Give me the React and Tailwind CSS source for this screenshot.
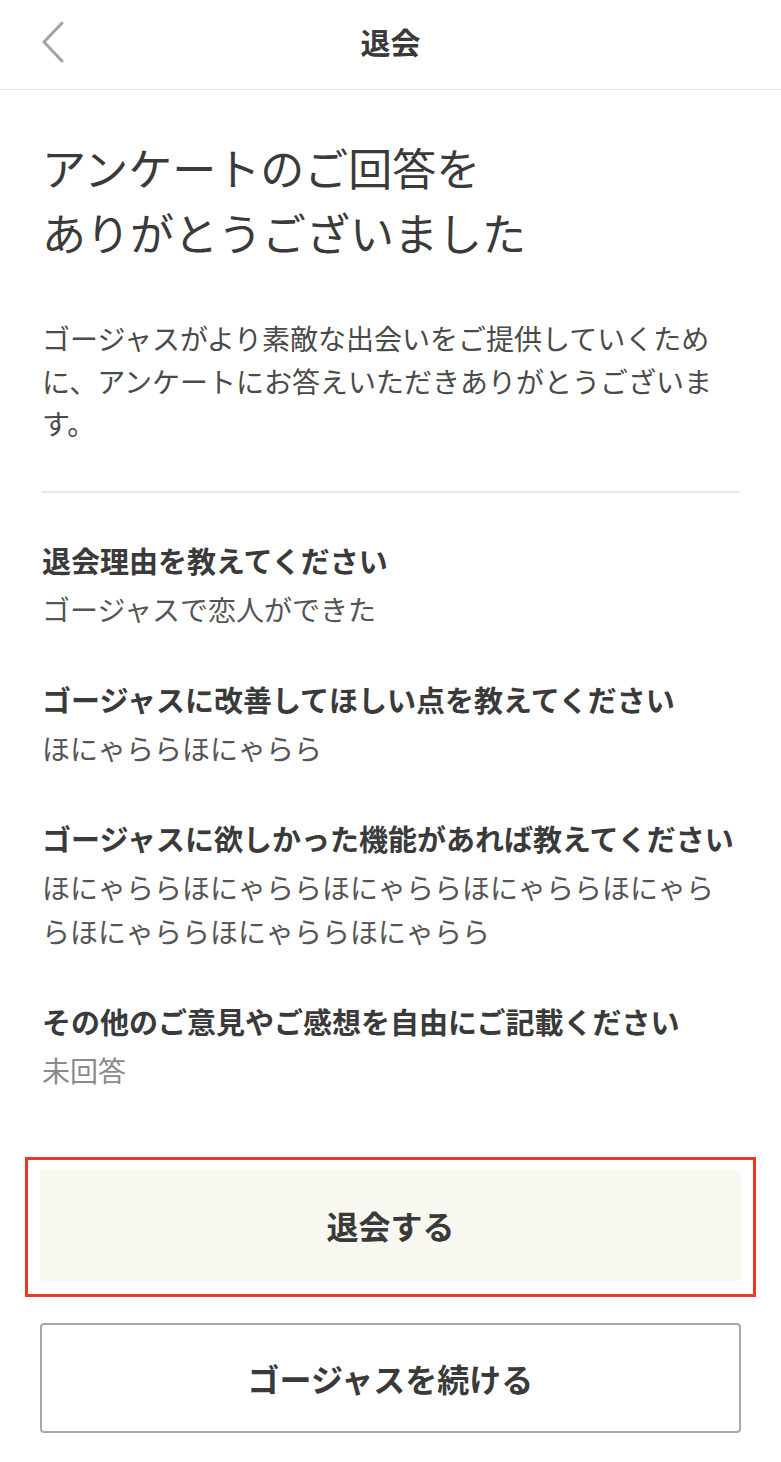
const font = {
  fontFamily: '"Noto Sans CJK JP", "Noto Sans", sans-serif',
};

const answers = [
  { q: "退会理由を教えてください", a: "ゴージャスで恋人ができた" },
  { q: "ゴージャスに改善してほしい点を教えてください", a: "ほにゃららほにゃらら" },
  {
    q: "ゴージャスに欲しかった機能があれば教えてください",
    a: "ほにゃららほにゃららほにゃららほにゃららほにゃららほにゃららほにゃららほにゃらら",
  },
  { q: "その他のご意見やご感想を自由にご記載ください", a: null },
];

export default function App() {
  return (
    <div
      className="min-h-screen bg-white text-[#3a3a3a] font-['Noto_Sans_CJK_JP','Noto_Sans',sans-serif]"
      style={font}
    >
      {/* header */}
      <div className="relative h-[90px] flex items-center justify-center border-b border-[#e6e6e6]">
        <button className="absolute left-[38px] top-[20px] w-[30px] h-[44px] flex items-center justify-center">
          <svg width="24" height="42" viewBox="0 0 24 42" fill="none">
            <path
              d="M21 2 L3 21 L21 40"
              stroke="#a4a59d"
              strokeWidth="3"
              strokeLinecap="round"
              strokeLinejoin="round"
            />
          </svg>
        </button>
        <h1 className="text-[30px] font-bold leading-none -mt-[8px]">退会</h1>
      </div>

      <div className="px-[42px]">
        <h2 className="pt-[45px] text-[44px] leading-[65px] font-normal">
          アンケートのご回答を
          <br />
          ありがとうございました
        </h2>

        <p className="mt-[52px] text-[28px] leading-[42.5px] text-[#4a4a4a]">
          ゴージャスがより素敵な出会いをご提供していくために、アンケートにお答えいただきありがとうございます。
        </p>

        <div className="mt-[46px] h-[2px] bg-[#e8e8e8] -mx-px" />

        <div className="pt-[45px] flex flex-col gap-[46px]">
          {answers.map((item) => (
            <div key={item.q}>
              <div className="text-[29px] leading-[44px] font-bold mb-[5px] whitespace-nowrap">
                {item.q}
              </div>
              {item.a ? (
                <div className="text-[28px] leading-[44px] text-[#555555] break-all">
                  {item.a}
                </div>
              ) : (
                <div className="text-[28px] leading-[44px] text-[#8a8a8a]">
                  未回答
                </div>
              )}
            </div>
          ))}
        </div>
      </div>

      {/* buttons */}
      <div className="px-[25px] mt-[65px]">
        <div className="border-[3px] border-[#ec3a22] px-[12px] pt-[10px] pb-[13px]">
          <button className="w-full h-[111px] rounded-[4px] bg-[#f8f8f1] text-[32px] font-bold text-[#3a3a3a]">
            退会する
          </button>
        </div>
      </div>
      <div className="px-[40px] pt-[26px] pb-[25px]">
        <button className="w-full h-[110px] rounded-[4px] border-2 border-[#a9a9a3] bg-white text-[32px] font-bold text-[#3a3a3a]">
          ゴージャスを続ける
        </button>
      </div>
    </div>
  );
}
